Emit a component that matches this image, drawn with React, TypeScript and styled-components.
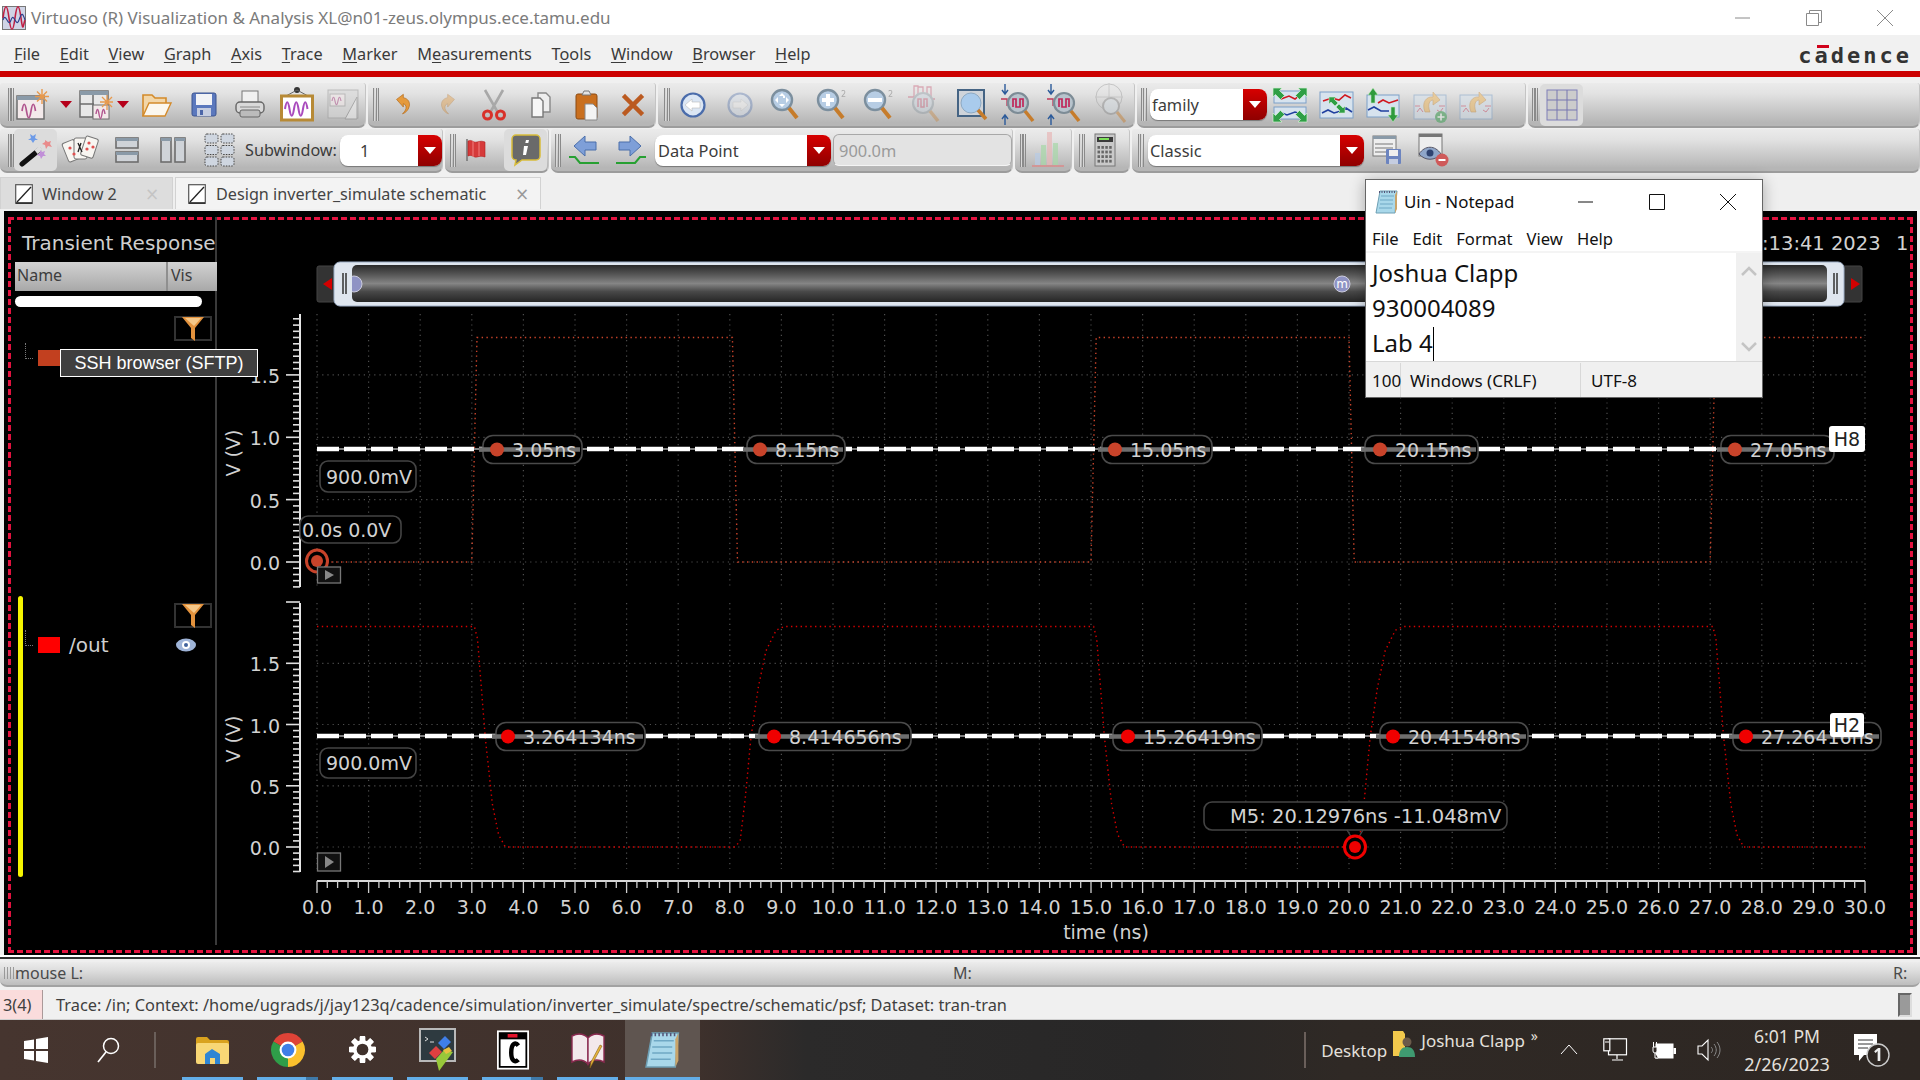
import React from "react";
import styled, { createGlobalStyle } from "styled-components";

const GlobalStyle = createGlobalStyle`
  html, body { margin: 0; padding: 0; width: 1920px; height: 1080px; overflow: hidden; background: #f0f0f0; }
  body { font-family: "Noto Sans", "Liberation Sans", sans-serif; }
  * { box-sizing: border-box; }
`;

const Page = styled.div`
  position: relative; width: 1920px; height: 1080px; display: flex; flex-direction: column; background: #f0f0f0; overflow: hidden;
`;
const TitleBar = styled.div`
  height: 35px; background: #fff; display: flex; align-items: center; padding-left: 2px; box-shadow: 0 1px 1px #ccc; position: relative;
`;
const TitleText = styled.span`
  margin-left: 5px; font-size: 17px; color: #7b7b7b; white-space: nowrap; flex: 1;
`;
const WinBtn = styled.div<{ $w: number }>`
  width: ${(p) => p.$w}px; display: flex; justify-content: center; align-items: center;
`;
const MenuBar = styled.div`
  height: 36px; background: #f1f1f1; display: flex; align-items: center; padding: 2px 0 0 14px; gap: 19.7px; font-size: 16.3px; color: #3a3a3a; position: relative;
`;
const MenuItem = styled.span`
  white-space: nowrap;
  u { text-underline-offset: 2px; }
`;
const Cadence = styled.div`
  position: absolute; right: 8px; top: 8px; font-family: "DejaVu Sans Mono", monospace; font-weight: 700; font-size: 22px; letter-spacing: 3px; color: #333;
  span { position: relative; }
  span::before { content: ""; position: absolute; left: 2px; right: 2px; top: 2px; height: 3px; background: #d0021b; }
`;
const RedRule = styled.div`height: 6px; background: #cc0000; flex: none;`;
const ToolRow = styled.div<{ $mt: number; $h: number }>`
  display: flex; height: ${(p) => p.$h}px; margin-top: ${(p) => p.$mt}px; flex: none;
`;
const Section = styled.div<{ $w?: number; $pl: number; $last?: boolean }>`
  width: ${(p) => (p.$w ? `${p.$w}px` : "auto")}; flex: ${(p) => (p.$last ? 1 : "none")}; margin-right: ${(p) => (p.$last ? 0 : 2)}px;
  padding-left: ${(p) => p.$pl}px; display: flex; align-items: center;
  background: linear-gradient(#ebebeb, #e2e2e2 25%, #b6b6b6 92%); border-bottom: 2px solid #9c9c9c; border-radius: 3px 3px 7px 7px;
  border-right: 1px solid #c4c4c4;
`;
const Grip = styled.div`
  width: 6px; height: 33px; flex: none;
  background: repeating-linear-gradient(90deg, #8a8a8a 0 1px, #d8d8d8 1px 2px, transparent 2px 2.5px);
`;
const Slot = styled.div<{ $w: number }>`
  width: ${(p) => p.$w}px; flex: none; display: flex; justify-content: center; align-items: center;
`;
const Pressed = styled.div<{ $w: number; $ml?: number }>`
  width: ${(p) => p.$w}px; height: 42px; margin-left: ${(p) => p.$ml ?? 0}px; flex: none; display: flex; justify-content: center; align-items: center;
  background: #dcdcdc; border-radius: 5px;
`;
const Combo = styled.div<{ $w: number; $ml?: number }>`
  width: ${(p) => p.$w}px; height: 31px; margin-left: ${(p) => p.$ml ?? 0}px; flex: none; display: flex; background: #fff; border-radius: 8px; overflow: hidden;
  box-shadow: 0 1px 1px #777; font-size: 16.4px; color: #3c3c3c; align-items: center;
`;
const ComboText = styled.span<{ $pl: number }>`flex: 1; padding-left: ${(p) => p.$pl}px; white-space: nowrap;`;
const ComboDrop = styled.div`
  width: 24px; height: 100%; background: linear-gradient(#d70000, #a30000 70%, #8f0000); display: flex; align-items: center; justify-content: center;
  &::after { content: ""; border-left: 6px solid transparent; border-right: 6px solid transparent; border-top: 7px solid #fff; }
`;
const DisabledInput = styled.div`
  width: 181px; height: 32px; margin-left: 2px; border-radius: 6px; background: #e3e3e3; border: 1px solid #a8a8a8; border-bottom-color: #f4f4f4; color: #9a9a9a; font-size: 16.4px; padding-left: 5px; display: flex; align-items: center;
`;
const LabelText = styled.span`
  font-size: 16.2px; color: #3c3c3c; margin-left: 2px; width: 95px; white-space: nowrap; flex: none;
`;
const TabStrip = styled.div`
  height: 32px; margin-top: 4px; display: flex; flex: none; background: #efefef;
`;
const Tab = styled.div<{ $w: number; $active?: boolean }>`
  width: ${(p) => p.$w}px; margin-right: 2px; flex: none; display: flex; align-items: center; font-size: 16.2px; color: #444;
  padding-left: ${(p) => (p.$active ? 12 : 14)}px;
  background: ${(p) => (p.$active ? "#f3f3f3" : "#dddddd")};
  border: 1px solid #d2d2d2; border-bottom: none;
`;
const TabLabel = styled.span<{ $ml: number; $w: number }>`margin-left: ${(p) => p.$ml}px; width: ${(p) => p.$w}px; white-space: nowrap; flex: none;`;
const TabClose = styled.span<{ $c: string }>`font-size: 17px; color: ${(p) => p.$c}; font-family: "DejaVu Sans", sans-serif;`;
const PlotShell = styled.div`
  height: 744px; margin-top: 2px; margin-left: 4px; margin-right: 3px; background: #000; padding: 6px 4px 2px 4px; flex: none; display: flex;
`;
const dash = "#e3123f";
const DashFrame = styled.div`
  flex: 1; display: flex; min-width: 0;
  background:
    repeating-linear-gradient(90deg, ${dash} 0 6px, transparent 6px 9px) left top / 100% 3px no-repeat,
    repeating-linear-gradient(90deg, ${dash} 0 6px, transparent 6px 9px) left bottom / 100% 3px no-repeat,
    repeating-linear-gradient(0deg, ${dash} 0 6px, transparent 6px 9px) left top / 3px 100% no-repeat,
    repeating-linear-gradient(0deg, ${dash} 0 6px, transparent 6px 9px) right top / 3px 100% no-repeat;
`;
const LeftPanel = styled.div`
  width: 209px; flex: none; padding-left: 7px; margin-bottom: 8px; border-right: 2px solid #3a3a3a; display: flex; flex-direction: column; font-family: "DejaVu Sans", sans-serif; color: #ccc;
`;
const PanelTitle = styled.div`
  height: 45px; padding-left: 7px; padding-top: 13px; font-size: 20px; line-height: 26px; color: #cfcfcf; white-space: nowrap;
`;
const PanelHead = styled.div`
  height: 29px; width: 202px; flex: none; display: flex; margin-right: -2px; background: linear-gradient(#d2d2d2, #a8a8a8); font-size: 16px; color: #3d3d3d; align-items: center; font-family: "Noto Sans", sans-serif; line-height: 25px;
`;
const HeadName = styled.span`width: 153px; padding-left: 2px; height: 100%; line-height: 27px; border-right: 2px solid #8f8f8f;`;
const HeadVis = styled.span`padding-left: 3px; height: 100%; line-height: 27px;`;
const WhitePill = styled.div`width: 187px; height: 11px; margin-top: 5px; background: #fff; border-radius: 6px; flex: none;`;
const FilterBtn = styled.div<{ $mt: number; $ml: number }>`
  width: 38px; height: 25px; flex: none; margin-top: ${(p) => p.$mt}px; margin-left: ${(p) => p.$ml}px; border: 2px solid #333; display: flex; align-items: center; justify-content: center;
`;
const TreeRow = styled.div<{ $mt: number; $ml: number }>`
  display: flex; align-items: center; height: 16px; flex: none; margin-top: ${(p) => p.$mt}px; margin-left: ${(p) => p.$ml}px;
`;
const Connector = styled.div`
  width: 8px; height: 16px; flex: none; margin-top: -14px; border-left: 1px dotted #777; border-bottom: 1px dotted #777;
`;
const Swatch = styled.div<{ $c: string }>`width: 22px; height: 16px; margin-left: 5px; background: ${(p) => p.$c}; flex: none;`;
const SigName = styled.span`margin-left: 9px; width: 107px; font-size: 20px; color: #cfcfcf; flex: none;`;
const OutBlock = styled.div`display: flex; margin-top: 230px; margin-left: 3px;`;
const YellowBar = styled.div`width: 5px; height: 281px; background: #f4f400; border-radius: 3px; flex: none;`;
const OutColumn = styled.div`display: flex; flex-direction: column;`;
const ChartSvg = styled.svg`flex: 1; display: block; min-width: 0;`;
const ChartText = styled.text`font-family: "DejaVu Sans", sans-serif; font-size: 19px; fill: #d2d2d2;`;
const WideText = styled(ChartText)`font-size: 19.5px;`;
const BadgeText = styled.text`font-family: "DejaVu Sans", sans-serif; font-size: 19px; fill: #222;`;

const Footer = styled.div`
  height: 7px; flex: none; background: #efefef; border-top: 2px solid #fff; position: relative;
  &::after { content: ""; display: block; height: 2px; background: #333; }
`;
const MouseBar = styled.div`
  height: 25px; flex: none; display: flex; align-items: center; padding: 0 0 2px 4px; font-size: 16px; color: #4a4a4a; background: linear-gradient(#ececec, #dcdcdc 40%, #bdbdbd); border-radius: 0 0 7px 7px; border-bottom: 2px solid #a2a2a2;
`;
const MouseGrip = styled.div`width: 11px; height: 12px; flex: none; background: repeating-linear-gradient(90deg, #999 0 1px, transparent 1px 3px);`;
const MouseL = styled.span`width: 938px; flex: none;`;
const MouseM = styled.span`width: 940px; flex: none;`;
const StatusRow = styled.div`
  height: 30px; margin-top: 3px; flex: none; display: flex; align-items: center; background: #f0f0f0; border-bottom: 1px solid #cfcfcf; font-size: 16.36px; color: #3f3f3f;
`;
const StatusPink = styled.div`width: 43px; height: 100%; background: #fadcdc; border-right: 1px solid #a99; padding-left: 3px; display: flex; align-items: center; flex: none;`;
const StatusText = styled.span`margin-left: 13px; flex: 1; white-space: nowrap;`;
const StatusBox = styled.div`width: 14px; height: 24px; margin-right: 8px; background: #9a9a9a; border: 2px solid #666; border-right-color: #ddd; border-bottom-color: #ddd; flex: none;`;

const Taskbar = styled.div`
  height: 60px; flex: none; display: flex; color: #e4e0dc; font-family: "Noto Sans", sans-serif; padding-right: 13px;
  background: linear-gradient(90deg, #46352f 0%, #3f312c 36%, #2b2a2a 42%, #282727 60%, #2f2925 70%, #2e2723 100%);
`;
const TaskCell = styled.div<{ $w: number }>`width: ${(p) => p.$w}px; flex: none; display: flex; align-items: center; justify-content: center;`;
const TaskSep = styled.div<{ $ml: number; $mr: number }>`width: 2px; height: 36px; align-self: center; margin-left: ${(p) => p.$ml}px; margin-right: ${(p) => p.$mr}px; background: #6a5f5a; flex: none;`;
const AppSlot = styled.div<{ $on?: boolean }>`
  width: 75px; flex: none; display: flex; flex-direction: column; background: ${(p) => (p.$on ? "#5f5550" : "transparent")};
`;
const AppIcon = styled.div`flex: 1; display: flex; align-items: center; justify-content: center; padding-top: 2px;`;
const AppLine = styled.div<{ $on?: boolean; $split?: boolean }>`
  height: 3px; margin: ${(p) => (p.$on ? "0" : "0 7px")}; flex: none;
  background: ${(p) => (p.$split ? "linear-gradient(90deg,#63aee8 80%,#3f79a8 80%)" : "#63aee8")};
`;
const TaskSpacer = styled.div`flex: 1;`;
const TaskText = styled.span<{ $s: number; $ml?: number; $mr?: number; $mt?: number }>`
  font-size: ${(p) => p.$s}px; margin-left: ${(p) => p.$ml ?? 0}px; margin-right: ${(p) => p.$mr ?? 0}px; margin-top: ${(p) => p.$mt ?? 0}px; white-space: nowrap; align-self: center; flex: none;
`;
const ClockCol = styled.div`width: 96px; margin-left: 9px; display: flex; flex-direction: column; align-items: center; justify-content: center; gap: 4px; flex: none; line-height: 24px;`;
const ClockTime = styled.span`font-size: 17.600px;`;
const ClockDate = styled.span`font-size: 18px;`;

const Tooltip = styled.div`
  position: absolute; left: 60px; top: 349px; width: 198px; height: 28px; background: #3f3f3f; border: 1px solid #fff; color: #fff; padding-top: 1px;
  font-family: "Liberation Sans", sans-serif; font-size: 18px; display: flex; align-items: center; justify-content: center;
`;
const Notepad = styled.div`
  position: absolute; left: 1365px; top: 179px; width: 398px; height: 219px; background: #fff; border: 1px solid #666; display: flex; flex-direction: column; color: #111;
  box-shadow: 0 2px 14px rgba(0,0,0,.3);
`;
const NpTitle = styled.div`height: 45px; display: flex; align-items: center; padding: 0 0 2px 8px; flex: none; font-size: 16.9px;`;
const NpTitleText = styled.span`margin-left: 4px; width: 146px; flex: none; white-space: nowrap;`;
const NpBtn = styled.div`width: 71px; flex: none; display: flex; justify-content: center;`;
const NpMenu = styled.div`height: 28px; display: flex; align-items: center; gap: 14px; padding-left: 6px; font-size: 16.6px; flex: none; border-bottom: 2px solid #f4f4f4;`;
const NpBody = styled.div`flex: 1; display: flex; min-height: 0;`;
const NpText = styled.div`flex: 1; padding: 2px 0 0 6px; font-size: 24px; line-height: 35px;`;
const Caret = styled.span`display: inline-block; width: 1px; height: 34px; background: #000; vertical-align: -9px;`;
const NpScroll = styled.div`width: 26px; background: #f0f0f0; display: flex; flex-direction: column; justify-content: space-between; align-items: center; padding: 12px 0 8px; flex: none;`;
const NpStatus = styled.div`height: 36px; flex: none; background: #f0f0f0; border-top: 1px solid #d8d8d8; display: flex; align-items: center; font-size: 17px; position: relative; padding-top: 1px;`;
const NpCell = styled.div<{ $w: number; $pl: number; $b?: boolean }>`
  width: ${(p) => p.$w}px; padding-left: ${(p) => p.$pl}px; height: 100%; display: flex; align-items: center; flex: none; white-space: nowrap; border-right: ${(p) => (p.$b ? "1px solid #d8d8d8" : "none")};
`;
const Ic = styled.svg`display: block; overflow: visible; flex: none; filter: blur(0.25px);`;

/* ---------- icons ---------- */
const W = (p: { d?: string; c?: string; w?: number }) => (
  <path d={p.d ?? "M7 20c1.5-9 3-9 4 0s2.5 9 4 0 2.5-9 4 0"} fill="none" stroke={p.c ?? "#b1558f"} strokeWidth={p.w ?? 1.7} />
);
const NewPlot = () => (
  <Ic width="34" height="32" viewBox="0 0 34 32">
    <rect x="1" y="7" width="27" height="23" fill="#f3e9ea" stroke="#6c6c6c" strokeWidth="1.5" />
    <rect x="1" y="7" width="27" height="4" fill="#8a9aa8" />
    <W d="M6 22c1.5-9 3-9 4.5 0s3 9 4.5 0 3-9 4.5 0" />
    <path d="M26 0v15M19 7.500h14M21 2.500l10 10M31 2.500l-10 10" stroke="#e8994c" strokeWidth="1.4" />
  </Ic>
);
const NewSub = () => (
  <Ic width="34" height="32" viewBox="0 0 34 32">
    <rect x="1" y="2" width="28" height="26" fill="#e8e8e8" stroke="#6c6c6c" strokeWidth="1.5" />
    <rect x="1" y="2" width="28" height="4" fill="#8a9aa8" />
    <path d="M1 15h14M14 6v22" stroke="#6c6c6c" strokeWidth="1.5" />
    <rect x="14" y="16" width="16" height="14" fill="#f3e9ea" stroke="#6c6c6c" />
    <W d="M17 25c1-6 2-6 3 0s2 6 3 0 2-6 3 0" w={1.4} />
    <path d="M28 6v15M21 13h13M23 8l10 10M33 8l-10 10" stroke="#e8994c" strokeWidth="1.3" />
  </Ic>
);
const RedCaret = () => (
  <Ic width="12" height="7" viewBox="0 0 12 7"><path d="M0 0h12L6 7z" fill="#b5001a" /></Ic>
);
const Folder = () => (
  <Ic width="30" height="26" viewBox="0 0 30 26">
    <path d="M1 24V3h9l3 3h11v6" fill="#f2d6a8" stroke="#d38a2a" strokeWidth="1.6" />
    <path d="M1 24l6-13h22l-6 13z" fill="#fbf7ee" stroke="#d38a2a" strokeWidth="1.4" />
  </Ic>
);
const Save = () => (
  <Ic width="26" height="25" viewBox="0 0 26 25">
    <rect x="1" y="1" width="24" height="23" rx="2" fill="#5b78bd" stroke="#3d5590" />
    <rect x="5" y="2" width="16" height="11" fill="#f2f3f6" />
    <rect x="6" y="16" width="14" height="8" fill="#c5cde0" />
    <rect x="9" y="18" width="3" height="5" fill="#4c66a8" />
  </Ic>
);
const Print = () => (
  <Ic width="30" height="29" viewBox="0 0 30 29">
    <rect x="7" y="1" width="16" height="13" fill="#f0f0f0" stroke="#777" />
    <rect x="1" y="12" width="28" height="11" rx="4" fill="#d9d9d9" stroke="#666" strokeWidth="1.4" />
    <rect x="5" y="20" width="20" height="7" rx="2" fill="#bcbcbc" stroke="#666" />
    <path d="M5 17h20" stroke="#888" />
  </Ic>
);
const PlotFrame = () => (
  <Ic width="34" height="35" viewBox="0 0 34 35">
    <circle cx="17" cy="3" r="3" fill="#333" />
    <path d="M6 9l11-6 11 6" fill="none" stroke="#666" />
    <rect x="1.500" y="9" width="31" height="24" fill="#fff" stroke="#b78a36" strokeWidth="3" />
    <W d="M5 22c1.500-9 3-9 4.500 0s3 9 4.500 0 3-9 4.500 0 3 9 4.500 0 3-9 4.500 0" c="#a94bbd" w={2} />
  </Ic>
);
const DimPlots = () => (
  <Ic width="32" height="32" viewBox="0 0 32 32" opacity=".55">
    <rect x="1" y="1" width="30" height="28" fill="#d8d8d8" stroke="#999" />
    <rect x="3" y="5" width="15" height="12" fill="#f3e9ea" stroke="#999" />
    <W d="M5 12c1-5 2-5 3 0s2 5 3 0 2-5 3 0" w={1.2} />
    <path d="M18 30L30 8v22z" fill="#eee" stroke="#888" />
  </Ic>
);
const Undo = ({ dim }: { dim?: boolean }) => (
  <Ic width="17" height="23" viewBox="0 0 20 26" opacity={dim ? 0.4 : 1}>
    <g transform={dim ? "translate(20 0) scale(-1 1)" : ""}>
      <path d="M3 7l8-6v4c6 1 8 6 7 10-1 5-5 8-8 9 3-3 5-6 4-9-1-2-2-3-3-3v4z" fill="#e59a3c" stroke="#b26a1c" strokeWidth=".8" />
    </g>
  </Ic>
);
const Scissors = () => (
  <Ic width="26" height="32" viewBox="0 0 26 32">
    <path d="M4 1l12 21M22 1L10 22" stroke="#a8a8a8" strokeWidth="2.6" />
    <circle cx="6.500" cy="26" r="4" fill="none" stroke="#d8322a" strokeWidth="3" />
    <circle cx="19.500" cy="26" r="4" fill="none" stroke="#d8322a" strokeWidth="3" />
  </Ic>
);
const Copy = () => (
  <Ic width="20" height="26" viewBox="0 0 20 26">
    <path d="M7 1h8l4 4v15H7z" fill="#eee" stroke="#888" strokeWidth="1.4" />
    <path d="M1 6h8l3 3v16H1z" fill="#f6f6f6" stroke="#777" strokeWidth="1.4" />
  </Ic>
);
const Paste = () => (
  <Ic width="24" height="32" viewBox="0 0 24 32">
    <rect x="1" y="5" width="21" height="25" rx="2" fill="#c96f1e" stroke="#8b4a12" />
    <path d="M7 6l2-4h5l2 4z" fill="#e3e3e3" stroke="#777" />
    <path d="M10 15h8l4 4v12H10z" fill="#f3f3f3" stroke="#888" />
  </Ic>
);
const Cross = () => (
  <Ic width="22" height="22" viewBox="0 0 22 22">
    <path d="M3 3l16 16M19 3L3 19" stroke="#bb5a20" strokeWidth="4.5" strokeLinecap="square" />
  </Ic>
);
const Nav = ({ dir, dim }: { dir: number; dim?: boolean }) => (
  <Ic width="26" height="26" viewBox="0 0 26 26" opacity={dim ? 0.35 : 1}>
    <circle cx="13" cy="13" r="11.500" fill="#dbe6f4" stroke="#4a6cab" strokeWidth="2.2" />
    <path d={dir < 0 ? "M5 13l7-6v3h8v6h-8v3z" : "M21 13l-7-6v3H6v6h8v3z"} fill="#fff" stroke="#bbb" strokeWidth=".6" />
  </Ic>
);
const Mag = ({ inner, sup, dim }: { inner?: React.ReactNode; sup?: boolean; dim?: boolean }) => (
  <Ic width="32" height="34" viewBox="0 0 32 34" opacity={dim ? 0.4 : 1}>
    <circle cx="12" cy="12" r="10" fill="#b7cde4" stroke="#7c8f9e" strokeWidth="2.4" />
    {inner}
    <path d="M19 20l8 10" stroke="#c67c2b" strokeWidth="4" />
    {sup && <text x="25" y="9" fontSize="8" fontFamily="DejaVu Sans" fill="#aaa">2</text>}
  </Ic>
);
const ZoomXIcon = ({ dim }: { dim?: boolean }) => (
  <Ic width="36" height="44" viewBox="0 0 36 44" opacity={dim ? 0.35 : 1}>
    <path d="M1 14h6V3h4v11 M11 4h5v12h4V4h4v12h4" fill="none" stroke="#c0395a" strokeWidth="1.3" />
    <circle cx="16" cy="20" r="10" fill="#c5d3df" stroke="#7d8c96" strokeWidth="2.2" />
    <path d="M11 24v-8h3v8h3v-8h3v8" fill="none" stroke="#c0395a" strokeWidth="1.5" />
    <path d="M23 28l8 10" stroke="#c67c2b" strokeWidth="3.6" />
  </Ic>
);
const ZoomFit = () => (
  <Ic width="30" height="32" viewBox="0 0 30 32">
    <rect x="1" y="1" width="26" height="26" fill="#cfd4da" stroke="#456484" strokeWidth="2" />
    <circle cx="14" cy="14" r="10" fill="#a9cbec" stroke="#8daac4" />
    <path d="M21 21l8 9" stroke="#c67c2b" strokeWidth="3.6" />
  </Ic>
);
const ZoomV = () => (
  <Ic width="34" height="44" viewBox="0 0 34 44">
    <path d="M4 1v9M1 7l3 4 3-4M4 42v-9M1 36l3-4 3 4" stroke="#2b5a9a" strokeWidth="1.4" fill="none" />
    <path d="M0 16h6v7" fill="none" stroke="#c0395a" strokeWidth="1.3" />
    <circle cx="17" cy="20" r="10" fill="#b7c3cc" stroke="#7d8c96" strokeWidth="2.2" />
    <path d="M12 24v-8h3v8h4v-8h3v8" fill="none" stroke="#c0275a" strokeWidth="1.7" />
    <path d="M24 28l8 10" stroke="#c67c2b" strokeWidth="3.6" />
  </Ic>
);
const Crosshair = () => (
  <Ic width="32" height="44" viewBox="0 0 32 44" opacity=".45">
    <circle cx="14" cy="14" r="13" fill="none" stroke="#999" />
    <path d="M14 0v28M0 14h28" stroke="#aaa" />
    <circle cx="16" cy="23" r="8" fill="#d5dde3" stroke="#888" strokeWidth="2" />
    <path d="M22 29l8 10" stroke="#c67c2b" strokeWidth="3" />
  </Ic>
);
const Panel = ({ children, dim }: { children: React.ReactNode; dim?: boolean }) => (
  <Ic width="34" height="34" viewBox="0 0 34 34" opacity={dim ? 0.5 : 1}>{children}</Ic>
);
const greenBig = "M0 0h9l-2.500 2.500 5 5-4 4-5-5L0 9zM34 0h-9l2.500 2.500-5 5 4 4 5-5L34 9zM0 34h9l-2.500-2.500 5-5-4-4-5 5L0 25zM34 34h-9l2.500-2.500-5-5 4-4 5 5 2.500-2.500z";
const TraceSplit = () => (
  <Panel>
    <rect x="1" y="3" width="32" height="12" fill="#d7e3ee" stroke="#7da0c8" /><rect x="1" y="19" width="32" height="12" fill="#d7e3ee" stroke="#7da0c8" />
    <path d="M8 11l8-3 6 3 6-5" stroke="#d01820" strokeWidth="1.6" fill="none" /><path d="M6 24l8 3 8-3 6 2" stroke="#2040a0" strokeWidth="1.6" fill="none" />
    <path d={greenBig} fill="#2f9f45" stroke="#d5f0d5" strokeWidth=".7" />
  </Panel>
);
const TraceOverlay = () => (
  <Panel>
    <rect x="0" y="4" width="33" height="26" fill="#d7e3ee" stroke="#7da0c8" />
    <path d="M3 13l9-3 7 2 6-5 6 3" stroke="#d01820" strokeWidth="1.6" fill="none" /><path d="M2 25l6-3 6 3 7-2 5-3 6 4" stroke="#2040a0" strokeWidth="1.6" fill="none" />
    <path d="M9 9h7l-2 2 4 4-3 3-4-4-2 2zM25 25h-7l2-2-4-4 3-3 4 4 2-2z" fill="#2f9f45" stroke="#d5f0d5" strokeWidth=".6" />
  </Panel>
);
const TraceSort = () => (
  <Panel>
    <rect x="1" y="7" width="32" height="22" fill="#d7e3ee" stroke="#7da0c8" />
    <path d="M12 15l5-3 6 3 9-3" stroke="#d01820" strokeWidth="1.6" fill="none" /><path d="M2 22l6-3 7 4 8 0" stroke="#2040a0" strokeWidth="1.6" fill="none" />
    <path d="M7 0l5 7H9v8H5V7H2zM27 34l5-7h-3v-8h-4v8h-3z" fill="#2f9a3d" stroke="#bfe8bf" strokeWidth=".6" />
  </Panel>
);
const TraceCurl = ({ plus }: { plus?: boolean }) => (
  <Panel dim>
    <rect x="1" y="7" width="32" height="24" fill="#d7e3ee" stroke="#7da0c8" />
    <path d="M2 18h5M26 18h6M4 24l3-4 3 4M24 22l3 2 3-4" stroke="#d0506a" fill="none" />
    <path d="M12 24c-4-10 2-16 8-15V4l7 8-7 5v-5c-3 0-6 4-3 12z" fill="#f0b85a" stroke="#c08030" strokeWidth=".6" />
    {plus && <><circle cx="28" cy="29" r="6" fill="#38a050" /><path d="M28 25.500v7M24.500 29h7" stroke="#fff" strokeWidth="1.6" /></>}
  </Panel>
);
const GridIcon = () => (
  <Ic width="32" height="32" viewBox="0 0 32 32">
    <rect x="1" y="1" width="30" height="30" fill="#ccc" stroke="#7f7fb8" />
    <path d="M1 11h30M1 21h30M11 1v30M21 1v30" stroke="#7676b0" strokeWidth="1" />
  </Ic>
);
const Wand = () => (
  <Ic width="34" height="34" viewBox="0 0 34 34">
    <path d="M3 31l17-14" stroke="#111" strokeWidth="5" strokeLinecap="round" />
    <path d="M17 19l5-4" stroke="#ddd" strokeWidth="5" />
    <path d="M11 1l3 2 3-2-1 4 3 2h-3l-2 3-2-3H9l3-2z" fill="#6d9be8" />
    <path d="M26 7l3 2 3-1-1 3 2 3-4-1-2 3-1-4-3-1 3-2z" fill="#e98b8b" />
    <path d="M21 17l2 2 3-1-1 3 2 2-3 0-2 3-1-3-3-1 3-2z" fill="#c18fd8" />
  </Ic>
);
const Cards = () => (
  <Ic width="36" height="32" viewBox="0 0 36 32">
    <g stroke="#777" fill="#f8f6f2">
      <rect x="3" y="7" width="13" height="20" rx="2" transform="rotate(-22 9 17)" />
      <rect x="12" y="4" width="13" height="21" rx="2" />
      <rect x="21" y="3" width="13" height="20" rx="2" transform="rotate(18 27 13)" />
    </g>
    <circle cx="8" cy="14" r="1.600" fill="#e05050" /><circle cx="12" cy="20" r="1.600" fill="#e05050" />
    <path d="M16 9l4 9M19 9l-3 9" stroke="#222" strokeWidth="1.3" />
    <circle cx="27" cy="9" r="1.600" fill="#e05050" /><circle cx="31" cy="13" r="1.600" fill="#e05050" /><circle cx="25" cy="15" r="1.600" fill="#e05050" />
  </Ic>
);
const pane = { fill: "#cfd3d8", stroke: "#6d6d6d", strokeWidth: 1.6 };
const SplitH = () => (
  <Ic width="24" height="26" viewBox="0 0 24 26">
    <rect x="1" y="1" width="22" height="10" {...pane} /><rect x="1" y="1" width="22" height="3" fill="#8a9aa8" />
    <rect x="1" y="15" width="22" height="10" {...pane} /><rect x="1" y="15" width="22" height="3" fill="#8a9aa8" />
  </Ic>
);
const SplitV = () => (
  <Ic width="26" height="26" viewBox="0 0 26 26">
    <rect x="1" y="1" width="10" height="24" {...pane} /><rect x="1" y="1" width="10" height="3" fill="#8a9aa8" />
    <rect x="15" y="1" width="10" height="24" {...pane} /><rect x="15" y="1" width="10" height="3" fill="#8a9aa8" />
  </Ic>
);
const SixGrid = () => (
  <Ic width="32" height="34" viewBox="0 0 32 34">
    {[0, 1].map((c) => [0, 1, 2].map((r) => (
      <rect key={`${c}${r}`} x={1 + c * 16} y={1 + r * 11.5} width="13" height="9" rx="2" fill="#cfd6e0" stroke="#444" strokeDasharray="1.5 1.2" />
    )))}
  </Ic>
);
const Flag = () => (
  <Ic width="22" height="24" viewBox="0 0 22 24">
    <path d="M2 1v22" stroke="#777" strokeWidth="1.6" />
    <path d="M3 3c4-2 5 2 9 1s5-1 8 0v15c-3-1-5-1-8 0s-5-3-9-1z" fill="#d63a3a" stroke="#b02020" strokeWidth=".6" />
    <path d="M8 3v16M14 4v14" stroke="#f08080" />
  </Ic>
);
const Info = () => (
  <Ic width="30" height="32" viewBox="0 0 30 32">
    <path d="M5 1h20a4 4 0 0 1 4 4v17a4 4 0 0 1-4 4H11l-7 5 1-5a4 4 0 0 1-4-4V5a4 4 0 0 1 4-4z" fill="#6a6a6a" stroke="#d8bc3a" strokeWidth="1.5" />
    <path d="M13 12h4l-2 9h-3zM15 6h3l-.7 3h-3z" fill="#fff" />
  </Ic>
);
const ArrowNav = ({ right }: { right?: boolean }) => (
  <Ic width="32" height="30" viewBox="0 0 32 30">
    <g transform={right ? "" : "translate(32 0) scale(-1 1)"}>
      <path d="M4 7h11V1l11 10-11 10v-6H4z" fill="#7e9fd8" stroke="#4b6eaa" />
      <path d="M1 28h19l5-6h6" fill="none" stroke="#27a032" strokeWidth="2" />
    </g>
  </Ic>
);
const BarsIcon = () => (
  <Ic width="32" height="38" viewBox="0 0 32 38" opacity=".7">
    <rect x="3" y="22" width="5" height="12" fill="#b8cce6" /><rect x="9" y="14" width="5" height="20" fill="#a8d8a8" />
    <rect x="15" y="1" width="5" height="33" fill="#e8b8b8" /><rect x="21" y="12" width="5" height="22" fill="#a8d8a8" />
    <path d="M0 35h32" stroke="#d88" strokeWidth="2" />
  </Ic>
);
const Calc = () => (
  <Ic width="22" height="34" viewBox="0 0 22 34">
    <rect x="1" y="1" width="20" height="32" fill="#c9c9c9" stroke="#777" />
    <rect x="3" y="4" width="16" height="5" fill="#3b3b3b" /><rect x="5" y="5" width="10" height="2" fill="#7ee05a" />
    {[0, 1, 2, 3].map((r) => [0, 1, 2, 3].map((c) => <rect key={`${r}${c}`} x={3.5 + c * 3.9} y={13 + r * 4.6} width="2.5" height="2.8" fill="#666" />))}
  </Ic>
);
const ListSave = () => (
  <Ic width="30" height="30" viewBox="0 0 30 30">
    <rect x="1" y="1" width="23" height="20" fill="#eee" stroke="#777" /><rect x="1" y="1" width="23" height="3" fill="#8a9aa8" />
    <path d="M3 9h18M3 13h18M3 17h12" stroke="#777" />
    <rect x="14" y="14" width="15" height="15" rx="1" fill="#6c84bf" /><rect x="17" y="15" width="9" height="6" fill="#eee" /><rect x="17" y="24" width="9" height="5" fill="#c5cde0" />
  </Ic>
);
const EyeMinus = () => (
  <Ic width="30" height="34" viewBox="0 0 30 34">
    <rect x="1" y="1" width="23" height="22" fill="#eee" stroke="#777" /><rect x="1" y="1" width="23" height="3" fill="#777" />
    <path d="M1 21c6-9 16-9 22 0-6 7-16 7-22 0z" fill="#8fa6c9" stroke="#556" />
    <circle cx="12" cy="20" r="3.500" fill="#2f4370" />
    <circle cx="24" cy="27" r="6.500" fill="#cf5a5a" /><path d="M20.500 27h7" stroke="#fff" strokeWidth="2" />
  </Ic>
);
const TabDoc = () => (
  <Ic width="18" height="20" viewBox="0 0 18 20">
    <rect x=".7" y=".7" width="16.6" height="18.6" fill="#fff" stroke="#555" strokeWidth="1.2" />
    <path d="M2 18L16 3" stroke="#222" strokeWidth="1.3" />
    <path d="M1 19h16" stroke="#222" strokeWidth="1.5" />
  </Ic>
);
const Funnel = () => (
  <Ic width="22" height="24" viewBox="0 0 22 24">
    <path d="M0 0h22L13 11v13l-4-3V11z" fill="#e3923d" />
    <path d="M3 1h16l-7 8z" fill="#f5c788" />
  </Ic>
);
const Eye = () => (
  <Ic width="20" height="14" viewBox="0 0 20 14">
    <ellipse cx="10" cy="7" rx="10" ry="6.500" fill="#9fb4d8" />
    <circle cx="10" cy="7" r="4" fill="#fff" /><circle cx="10" cy="7" r="2" fill="#42639c" />
  </Ic>
);
const VirtuosoLogo = () => (
  <Ic width="24" height="24" viewBox="0 0 24 24">
    <rect x=".5" y=".5" width="23" height="23" fill="#cfd4e6" stroke="#777" />
    <path d="M1 12c2-15 4-15 6 0s4 15 6 0 4-15 6 0 2 8 4 2" fill="none" stroke="#c02044" strokeWidth="1.6" />
    <path d="M1 14c3-9 5 9 8 0s5 9 8 0 4-6 6 0" fill="none" stroke="#2c3e8c" strokeWidth="1.1" />
  </Ic>
);
const LineGlyph = ({ d, w = 18, h = 18, c = "#8a8a8a", sw = 1 }: { d: string; w?: number; h?: number; c?: string; sw?: number }) => (
  <svg width={w} height={h} viewBox={`0 0 ${w} ${h}`} style={{ display: "block" }}>
    <path d={d} fill="none" stroke={c} strokeWidth={sw} />
  </svg>
);
const NotepadIcon = ({ s = 26 }: { s?: number }) => (
  <Ic width={s} height={s} viewBox="0 0 26 26">
    <path d="M6 2h17l-2 22H2z" fill="#a9d8ea" stroke="#6d9fb4" />
    <path d="M7 7h13M6 11h13M6 15h13M5 19h13" stroke="#6fa8c4" />
    <path d="M5 3h17" stroke="#557" strokeDasharray="1 1.5" strokeWidth="2" />
    <path d="M21 6l2-4v18l-2 4z" fill="#c9a46a" />
  </Ic>
);
const WinLogo = () => (
  <Ic width="24" height="26" viewBox="0 0 24 26">
    <path d="M0 4l10-1.600V12H0zM12 2l12-2v12H12zM0 14h10v9.600L0 22zM12 14h12v12l-12-2z" fill="#fff" />
  </Ic>
);
const Search = () => (
  <Ic width="24" height="26" viewBox="0 0 24 26">
    <circle cx="15" cy="9" r="7.500" fill="none" stroke="#fff" strokeWidth="1.5" />
    <path d="M10 15L2 25" stroke="#fff" strokeWidth="1.7" />
  </Ic>
);
const FolderTask = () => (
  <Ic width="33" height="28" viewBox="0 0 33 28">
    <path d="M0 3a2 2 0 0 1 2-2h9l3 3h17a2 2 0 0 1 2 2v3H0z" fill="#d9a21e" />
    <rect x="0" y="7" width="33" height="21" rx="2" fill="#f8d775" />
    <path d="M9 28v-10l7-5 8 5v10h-5v-6h-5v6z" fill="#2f86d4" />
  </Ic>
);
const Chrome = () => (
  <Ic width="36" height="36" viewBox="0 0 32 32">
    <path d="M16 16L3 8.500A15 15 0 0 1 29 8.500z" fill="#de4337" />
    <path d="M16 16L29 8.500A15 15 0 0 1 16 31z" fill="#fbc02d" />
    <path d="M16 16V31A15 15 0 0 1 3 8.500z" fill="#2f9e49" />
    <circle cx="16" cy="16" r="7.500" fill="#fff" /><circle cx="16" cy="16" r="5.600" fill="#3f7fe8" />
  </Ic>
);
const Gear = () => (
  <Ic width="27" height="27" viewBox="0 0 30 30">
    <g fill="#fff">
      {[0, 45, 90, 135, 180, 225, 270, 315].map((a) => <rect key={a} x="12" y="0" width="6" height="30" rx="1" transform={`rotate(${a} 15 15)`} />)}
      <circle cx="15" cy="15" r="10.500" />
    </g>
    <circle cx="15" cy="15" r="6.500" fill="#3f312c" />
  </Ic>
);
const TermTask = () => (
  <Ic width="38" height="44" viewBox="0 0 38 44">
    <rect x="1" y="1" width="35" height="32" fill="#2e3a40" stroke="#b9b9b9" strokeWidth="2" />
    <path d="M6 9l3 2-3 2M11 14h4" stroke="#ddd" fill="none" />
    <path d="M10 25l7-7 6 6-7 7z" fill="#e04040" /><path d="M19 15l7-7 6 6-7 7z" fill="#3f7fe8" />
    <path d="M17 31l8-9 9 2-14 19z" fill="#98c83a" /><path d="M24 22l6-3 3 4-6 3z" fill="#e8c040" />
  </Ic>
);
const CBox = () => (
  <Ic width="32" height="44" viewBox="0 0 36 44">
    <rect x="1" y="1" width="34" height="42" fill="#000" stroke="#fff" strokeWidth="2" />
    <rect x="12" y="4" width="11" height="4" fill="#e3132b" />
    <rect x="4" y="10" width="28" height="30" fill="#fff" />
    <path d="M24 17c-3-4-8-3-8 8 0 10 5 11 8 8" fill="none" stroke="#000" strokeWidth="5" />
  </Ic>
);
const Book = () => (
  <Ic width="36" height="36" viewBox="0 0 36 36">
    <path d="M2 4c6-3 12-2 16 2v26c-4-4-10-5-16-2z" fill="#f3e9ec" stroke="#8a2a50" strokeWidth="1.4" />
    <path d="M34 4c-6-3-12-2-16 2v26c4-4 10-5 16-2z" fill="#f3e9ec" stroke="#8a2a50" strokeWidth="1.4" />
    <path d="M32 14L20 36l1-6 9-17z" fill="#e8b53a" stroke="#84621a" strokeWidth=".6" />
  </Ic>
);
const Person = () => (
  <Ic width="22" height="30" viewBox="0 0 22 30" style={{ marginTop: -10 }}>
    <path d="M0 1h10l2 3v22H0z" fill="#f2c94c" />
    <circle cx="14" cy="12" r="4.500" fill="#6b5a4a" />
    <path d="M6 27c0-7 3-10 8-10s8 3 8 10z" fill="#3f9a70" />
  </Ic>
);
const Monitor = () => (
  <Ic width="24" height="24" viewBox="0 0 24 24">
    <rect x="5.500" y=".8" width="18" height="16" fill="none" stroke="#fff" strokeWidth="1.2" />
    <rect x=".8" y=".8" width="6" height="12" fill="#2e2723" stroke="#fff" strokeWidth="1.2" />
    <path d="M14 17v4M9 22h11M2 4h4" stroke="#fff" strokeWidth="1.2" />
  </Ic>
);
const Battery = () => (
  <Ic width="26" height="20" viewBox="0 0 26 20">
    <rect x="6" y="4" width="17" height="14" fill="#fff" stroke="#fff" />
    <rect x="23.500" y="8" width="2.500" height="6" fill="#fff" />
    <path d="M3 7v4a2 2 0 0 0 4 0V7zM3.500 7V2M6.500 7V2M5 13v5h3" fill="#2e2723" stroke="#fff" />
  </Ic>
);
const Speaker = () => (
  <Ic width="24" height="24" viewBox="0 0 24 24">
    <path d="M1 8h4l6-6v20l-6-6H1z" fill="none" stroke="#fff" strokeWidth="1.1" />
    <path d="M14 9c2 2 2 4 0 6M17 6c3 4 3 8 0 12M20 4c4 5 4 11 0 16" fill="none" stroke="#888" />
  </Ic>
);
const Notif = () => (
  <Ic width="38" height="36" viewBox="0 0 38 36">
    <path d="M2 2h23v21h-13l-5 6v-6H2z" fill="#fff" />
    <path d="M6 8h15M6 12h15M6 16h10" stroke="#333" />
    <circle cx="26" cy="23" r="11" fill="#2e2723" stroke="#ccc" strokeWidth="1.4" />
    <text x="26" y="29" textAnchor="middle" fontSize="17" fontFamily="Noto Sans" fontWeight="700" fill="#eee">1</text>
  </Ic>
);

/* ---------- chart ---------- */
const X = (t: number) => 317 + t * 51.6;
const YT = (v: number) => 562 - v * 124.7;
const YB = (v: number) => 847 - v * 122.5;
const pts = (a: number[][], y: (v: number) => number) => a.map(([t, v]) => `${X(t).toFixed(1)},${y(v).toFixed(1)}`).join(" ");
const inPts = [[0, 0], [3, 0], [3.1, 1.8], [8.05, 1.8], [8.15, 0], [15, 0], [15.1, 1.8], [20, 1.8], [20.1, 0], [27, 0], [27.1, 1.8], [30, 1.8]];
const fall = (t: number) => [[t, 1.8], [t + 0.06, 1.7], [t + 0.21, 0.9], [t + 0.35, 0.35], [t + 0.47, 0.1], [t + 0.6, 0]];
const rise = (t: number) => [[t, 0], [t + 0.1, 0.05], [t + 0.2, 0.4], [t + 0.31, 0.9], [t + 0.45, 1.3], [t + 0.6, 1.6], [t + 0.8, 1.77], [t + 0.95, 1.8]];
const outPts = [[0, 1.8], ...fall(3.05), ...rise(8.1), ...fall(15.05), ...rise(20.1), ...fall(27.05), [30, 0]];
const range = (n: number) => Array.from({ length: n }, (_, i) => i);

const YAxis = ({ top, bottom, y, label }: { top: number; bottom: number; y: (v: number) => number; label: number }) => {
  const ticks = range(Math.floor((y(-0.2) - top) / Math.abs(y(0) - y(0.05))) + 2).map((i) => -0.2 + i * 0.05);
  return (
    <g>
      <path d={`M300 ${top}V${bottom}`} stroke="#e6e6e6" strokeWidth="2" />
      {ticks.filter((v) => y(v) >= top - 1 && y(v) <= bottom + 1).map((v) => {
        const major = Math.abs(v * 2 - Math.round(v * 2)) < 0.01;
        return <path key={v} d={`M${major ? 286 : 293} ${y(v).toFixed(1)}H300`} stroke="#e0e0e0" strokeWidth="1.6" />;
      })}
      {[0, 0.5, 1, 1.5].map((v) => (
        <ChartText key={v} x={280} y={y(v) + 8} textAnchor="end">{v.toFixed(1)}</ChartText>
      ))}
      <ChartText transform={`translate(240 ${label}) rotate(-90)`} textAnchor="middle">V (V)</ChartText>
    </g>
  );
};
const Grid = ({ top, bottom, y }: { top: number; bottom: number; y: (v: number) => number }) => (
  <g stroke="#4e4e4e" strokeWidth="1.2" strokeDasharray="1.2 4">
    {range(31).map((i) => <path key={i} d={`M${X(i).toFixed(1)} ${top}V${bottom}`} />)}
    {[0, 0.5, 1, 1.5].map((v) => <path key={v} d={`M317 ${y(v).toFixed(1)}H1865`} />)}
  </g>
);
const HLine = ({ y }: { y: number }) => (
  <g>
    <path d={`M317 ${y}H1850`} stroke="#fff" strokeWidth="1" />
    <path d={`M317 ${y}H1850`} stroke="#fff" strokeWidth="4.5" strokeDasharray="22 5" />
  </g>
);
const Capsule = ({ x1, x2, y, dot, text, color }: { x1: number; x2: number; y: number; dot: number; text: string; color: string }) => (
  <g>
    <rect x={x1} y={y - 14} width={x2 - x1} height={28} rx={10} fill="#000" stroke="#4a4a4a" strokeWidth="1.6" />
    <path d={`M${x1 - 4} ${y}H${x2 - 2}`} stroke="#6e6e6e" strokeWidth="4.5" />
    <circle cx={dot} cy={y} r={7} fill={color} />
    <ChartText x={dot + 15} y={y + 7}>{text}</ChartText>
  </g>
);
const Box = ({ x1, x2, y1, y2, text, tx }: { x1: number; x2: number; y1: number; y2: number; text: string; tx: number }) => (
  <g>
    <rect x={x1} y={y1} width={x2 - x1} height={y2 - y1} rx={8} fill="#000" stroke="#444" strokeWidth="1.6" />
    <ChartText x={tx} y={(y1 + y2) / 2 + 7}>{text}</ChartText>
  </g>
);
const Badge = ({ x, y, w, h, text }: { x: number; y: number; w: number; h: number; text: string }) => (
  <g>
    <rect x={x} y={y} width={w} height={h} rx={3} fill="#fff" />
    <BadgeText x={x + w / 2} y={y + h / 2 + 7} textAnchor="middle">{text}</BadgeText>
  </g>
);
const Play = ({ y, h }: { y: number; h: number }) => (
  <g>
    <rect x={317.5} y={y} width={23} height={h} fill="#111" stroke="#777" strokeWidth="1.3" />
    <path d={`M325 ${y + 3}l9 ${h / 2 - 3}-9 ${h / 2 - 3}z`} fill="#888" />
  </g>
);
const Marker = ({ x, y, c, inner }: { x: number; y: number; c: string; inner: string }) => (
  <g>
    <ellipse cx={x} cy={y} rx={10.5} ry={11} fill="#000" stroke={c} strokeWidth="3" />
    <circle cx={x} cy={y} r={6} fill={inner} />
  </g>
);
const Chart = () => (
  <ChartSvg viewBox="217 217 1696 736" width="1696" height="736">
    <defs>
      <linearGradient id="sl" x1="0" y1="0" x2="0" y2="1">
        <stop offset="0" stopColor="#2a2a2a" /><stop offset=".28" stopColor="#5a5a5a" /><stop offset=".5" stopColor="#858585" /><stop offset=".72" stopColor="#484848" /><stop offset="1" stopColor="#262626" />
      </linearGradient>
    </defs>
    {/* slider */}
    <rect x="317" y="266" width="30" height="36" rx="2" fill="#333" stroke="#444" />
    <path d="M323 284l9-6v12z" fill="#d40000" />
    <rect x="1830" y="266" width="32" height="36" rx="2" fill="#333" stroke="#444" />
    <path d="M1860 284l-9-6v12z" fill="#d40000" />
    <rect x="334" y="262" width="1510" height="44" rx="6" fill="#dfe6ef" stroke="#9fb0c8" />
    <rect x="352" y="265" width="1475" height="37" rx="5" fill="url(#sl)" />
    <circle cx="354" cy="284" r="8" fill="#8f93c4" stroke="#ccd" />
    <rect x="337" y="266" width="15" height="35" fill="#dfe6ef" />
    <path d="M343 273v21M346 273v21M1834 273v21M1837 273v21" stroke="#333" strokeWidth="1.5" />
    <circle cx="1342" cy="284" r="8" fill="#8f93c4" stroke="#ccd" />
    <text x="1342" y="288" textAnchor="middle" fontSize="12" fontFamily="DejaVu Sans" fill="#fff">m</text>
    {/* titles */}
    <WideText x="1762" y="250">:13:41 2023</WideText>
    <WideText x="1896" y="250">1</WideText>
    {/* top plot */}
    <Grid top={314} bottom={587} y={YT} />
    <YAxis top={314} bottom={587} y={YT} label={453} />
    <polyline points={pts(inPts, YT)} fill="none" stroke="#c8432a" strokeWidth="1.4" strokeDasharray="1.4 3.4" />
    <HLine y={449} />
    <Capsule x1={483} x2={582} y={449.5} dot={497} text="3.05ns" color="#c8432a" />
    <Capsule x1={747} x2={845} y={449.5} dot={760} text="8.15ns" color="#c8432a" />
    <Capsule x1={1102} x2={1212} y={449.5} dot={1115} text="15.05ns" color="#c8432a" />
    <Capsule x1={1365} x2={1478} y={449.5} dot={1380} text="20.15ns" color="#c8432a" />
    <Capsule x1={1721} x2={1834} y={449.5} dot={1735} text="27.05ns" color="#c8432a" />
    <Badge x={1829} y={426} w={36} h={26} text="H8" />
    <Box x1={320} x2={416} y1={461} y2={492} text="900.0mV" tx={326} />
    <Box x1={300} x2={401} y1={516} y2={543} text="0.0s 0.0V" tx={302} />
    <Marker x={317} y={561} c="#c8432a" inner="#c8432a" />
    <Play y={567} h={16} />
    {/* bottom plot */}
    <Grid top={603} bottom={869} y={YB} />
    <YAxis top={603} bottom={872} y={YB} label={739} />
    <polyline points={pts(outPts, YB)} fill="none" stroke="#d80000" strokeWidth="1.4" strokeDasharray="1.4 3.4" />
    <HLine y={736} />
    <Capsule x1={496} x2={645} y={736.5} dot={508} text="3.264134ns" color="#f00000" />
    <Capsule x1={759} x2={911} y={736.5} dot={774} text="8.414656ns" color="#f00000" />
    <Capsule x1={1113} x2={1262} y={736.5} dot={1128} text="15.26419ns" color="#f00000" />
    <Capsule x1={1380} x2={1528} y={736.5} dot={1393} text="20.41548ns" color="#f00000" />
    <Capsule x1={1733} x2={1881} y={736.5} dot={1746} text="27.26416ns" color="#f00000" />
    <Badge x={1830} y={713} w={34} h={24} text="H2" />
    <Box x1={320} x2={416} y1={748} y2={778} text="900.0mV" tx={326} />
    <rect x={1204} y={802} width={303} height={28} rx={8} fill="#000" stroke="#444" strokeWidth="1.6" />
    <WideText x={1230} y={823}>M5: 20.12976ns -11.048mV</WideText>
    <path d="M1347 830l6 10M1363 830l-6 10" stroke="#444" strokeWidth="1.4" />
    <Marker x={1355} y={847} c="#f00000" inner="#f00000" />
    <Play y={853} h={18} />
    {/* x axis */}
    <path d="M317 881H1865" stroke="#d8d8d8" strokeWidth="2" />
    {range(151).map((i) => {
      const x = 317 + (i * 51.6) / 5;
      return <path key={i} d={`M${x.toFixed(1)} 881V${i % 5 === 0 ? 893 : 888}`} stroke="#cfcfcf" strokeWidth="1.3" />;
    })}
    {range(31).map((i) => (
      <ChartText key={i} x={X(i)} y={914} textAnchor="middle">{i.toFixed(1)}</ChartText>
    ))}
    <ChartText x={1106} y={939} textAnchor="middle">time (ns)</ChartText>
  </ChartSvg>
);

const menus: [string, string, string][] = [
  ["", "F", "ile"], ["", "E", "dit"], ["", "V", "iew"], ["", "G", "raph"], ["", "A", "xis"], ["", "T", "race"], ["", "M", "arker"],
  ["M", "e", "asurements"], ["T", "o", "ols"], ["", "W", "indow"], ["", "B", "rowser"], ["", "H", "elp"],
];

export default function App() {
  return (
    <Page>
      <GlobalStyle />
      <TitleBar>
        <VirtuosoLogo />
        <TitleText>Virtuoso (R) Visualization &amp; Analysis XL@n01-zeus.olympus.ece.tamu.edu</TitleText>
        <WinBtn $w={70}><LineGlyph d="M1 9h15" /></WinBtn>
        <WinBtn $w={71}><LineGlyph d="M1.5 4.5h12v12h-12zM4.5 4.5v-3h12v12h-3" /></WinBtn>
        <WinBtn $w={71}><LineGlyph d="M1 1l16 16M17 1L1 17" /></WinBtn>
      </TitleBar>
      <MenuBar>
        {menus.map(([a, b, c]) => <MenuItem key={a + b + c}>{a}<u>{b}</u>{c}</MenuItem>)}
        <Cadence>c<span>a</span>dence</Cadence>
      </MenuBar>
      <RedRule />
      <ToolRow $mt={6} $h={45}>
        <Section $w={366} $pl={8}>
          <Grip />
          <Slot $w={38}><NewPlot /></Slot><Slot $w={28}><RedCaret /></Slot>
          <Slot $w={32}><NewSub /></Slot><Slot $w={22}><RedCaret /></Slot>
          {[<Folder />, <Save />, <Print />, <PlotFrame />, <DimPlots />].map((n, i) => <Slot key={i} $w={46.5}>{n}</Slot>)}
        </Section>
        <Section $w={288} $pl={5}>
          <Grip />
          {[<Undo />, <Undo dim />, <Scissors />, <Copy />, <Paste />, <Cross />].map((n, i) => <Slot key={i} $w={46.2}>{n}</Slot>)}
        </Section>
        <Section $w={477} $pl={6}>
          <Grip />
          {[
            <Nav dir={-1} />, <Nav dir={1} dim />,
            <Mag inner={<path d="M12 5l3 3h-2v2h2v-2M5 12l3-3v6zM19 12l-3-3v6zM12 19l-3-3h6zM12 5l-3 3h6z" fill="#fff" />} />,
            <Mag sup inner={<path d="M10 6h4v4h4v4h-4v4h-4v-4H6v-4h4z" fill="#fff" />} />,
            <Mag sup inner={<path d="M5 10h14v4H5z" fill="#fff" />} />,
            <ZoomXIcon dim />, <ZoomFit />, <ZoomV />, <ZoomV />, <Crosshair />,
          ].map((n, i) => <Slot key={i} $w={46.4}>{n}</Slot>)}
        </Section>
        <Section $w={389} $pl={4}>
          <Grip />
          <Combo $w={117} $ml={3}><ComboText $pl={2}>family</ComboText><ComboDrop /></Combo>
          {[<TraceSplit />, <TraceOverlay />, <TraceSort />, <TraceCurl plus />, <TraceCurl />].map((n, i) => <Slot key={i} $w={46.5}>{n}</Slot>)}
        </Section>
        <Section $last $pl={4}>
          <Grip />
          <Pressed $w={43} $ml={2}><GridIcon /></Pressed>
        </Section>
      </ToolRow>
      <ToolRow $mt={1} $h={44}>
        <Section $w={443} $pl={8}>
          <Grip />
          <Pressed $w={43}><Wand /></Pressed>
          {[<Cards />, <SplitH />, <SplitV />, <SixGrid />].map((n, i) => <Slot key={i} $w={46.5}>{n}</Slot>)}
          <LabelText>Subwindow:</LabelText>
          <Combo $w={102}><ComboText $pl={20}>1</ComboText><ComboDrop /></Combo>
        </Section>
        <Section $w={104} $pl={5}>
          <Grip />
          <Slot $w={40}><Flag /></Slot>
          <Pressed $w={43} $ml={8}><Info /></Pressed>
        </Section>
        <Section $w={462} $pl={4}>
          <Grip />
          <Slot $w={46.5}><ArrowNav /></Slot>
          <Slot $w={46.5}><ArrowNav right /></Slot>
          <Combo $w={176} $ml={1}><ComboText $pl={3}>Data Point</ComboText><ComboDrop /></Combo>
          <DisabledInput>900.0m</DisabledInput>
        </Section>
        <Section $w={57} $pl={5}><Grip /><Slot $w={44}><BarsIcon /></Slot></Section>
        <Section $w={56} $pl={5}><Grip /><Slot $w={40}><Calc /></Slot></Section>
        <Section $last $pl={6}>
          <Grip />
          <Combo $w={216} $ml={4}><ComboText $pl={2}>Classic</ComboText><ComboDrop /></Combo>
          <Slot $w={46}><ListSave /></Slot>
          <Slot $w={46}><EyeMinus /></Slot>
        </Section>
      </ToolRow>
      <TabStrip>
        <Tab $w={173}>
          <TabDoc />
          <TabLabel $ml={9} $w={103}>Window 2</TabLabel>
          <TabClose $c="#c4c4c4">×</TabClose>
        </Tab>
        <Tab $w={366} $active>
          <TabDoc />
          <TabLabel $ml={10} $w={299}>Design inverter_simulate schematic</TabLabel>
          <TabClose $c="#999">×</TabClose>
        </Tab>
      </TabStrip>
      <PlotShell>
        <DashFrame>
          <LeftPanel>
            <PanelTitle>Transient Response</PanelTitle>
            <PanelHead><HeadName>Name</HeadName><HeadVis>Vis</HeadVis></PanelHead>
            <WhitePill />
            <FilterBtn $mt={9} $ml={159}><Funnel /></FilterBtn>
            <TreeRow $mt={9} $ml={10}><Connector /><Swatch $c="#c2401f" /></TreeRow>
            <OutBlock>
              <YellowBar />
              <OutColumn>
                <FilterBtn $mt={7} $ml={151}><Funnel /></FilterBtn>
                <TreeRow $mt={9} $ml={2}>
                  <Connector /><Swatch $c="#ff0000" />
                  <SigName>/out</SigName>
                  <Eye />
                </TreeRow>
              </OutColumn>
            </OutBlock>
          </LeftPanel>
          <Chart />
        </DashFrame>
      </PlotShell>
      <Footer />
      <MouseBar>
        <MouseGrip />
        <MouseL>mouse L:</MouseL>
        <MouseM>M:</MouseM>
        <span>R:</span>
      </MouseBar>
      <StatusRow>
        <StatusPink>3(4)</StatusPink>
        <StatusText>Trace: /in; Context: /home/ugrads/j/jay123q/cadence/simulation/inverter_simulate/spectre/schematic/psf; Dataset: tran-tran</StatusText>
        <StatusBox />
      </StatusRow>
      <Taskbar>
        <TaskCell $w={72}><WinLogo /></TaskCell>
        <TaskCell $w={72}><Search /></TaskCell>
        <TaskSep $ml={10} $mr={19} />
        <AppSlot><AppIcon><FolderTask /></AppIcon><AppLine /></AppSlot>
        <AppSlot><AppIcon><Chrome /></AppIcon><AppLine $split /></AppSlot>
        <AppSlot><AppIcon><Gear /></AppIcon><AppLine /></AppSlot>
        <AppSlot><AppIcon><TermTask /></AppIcon><AppLine /></AppSlot>
        <AppSlot><AppIcon><CBox /></AppIcon><AppLine $split /></AppSlot>
        <AppSlot><AppIcon><Book /></AppIcon><AppLine /></AppSlot>
        <AppSlot $on><AppIcon><NotepadIcon s={40} /></AppIcon><AppLine $on /></AppSlot>
        <TaskSpacer />
        <TaskSep $ml={0} $mr={15} />
        <TaskText $s={17}>Desktop</TaskText>
        <TaskCell $w={34}><Person /></TaskCell>
        <TaskText $s={17} $mt={-20}>Joshua Clapp</TaskText>
        <TaskText $s={14} $ml={6} $mr={8} $mt={-30}>»</TaskText>
        <TaskCell $w={46}><LineGlyph d="M1 13l8-9 8 9" c="#fff" /></TaskCell>
        <TaskCell $w={46}><Monitor /></TaskCell>
        <TaskCell $w={50}><Battery /></TaskCell>
        <TaskCell $w={42}><Speaker /></TaskCell>
        <ClockCol><ClockTime>6:01 PM</ClockTime><ClockDate>2/26/2023</ClockDate></ClockCol>
        <TaskCell $w={72}><Notif /></TaskCell>
      </Taskbar>
      <Tooltip>SSH browser (SFTP)</Tooltip>
      <Notepad>
        <NpTitle>
          <NotepadIcon />
          <NpTitleText>Uin - Notepad</NpTitleText>
          <NpBtn><LineGlyph d="M1 9h15" c="#111" /></NpBtn>
          <NpBtn><LineGlyph d="M1.5 1.5h15v15h-15z" c="#111" /></NpBtn>
          <NpBtn><LineGlyph d="M1 1l16 16M17 1L1 17" c="#111" /></NpBtn>
        </NpTitle>
        <NpMenu><span>File</span><span>Edit</span><span>Format</span><span>View</span><span>Help</span></NpMenu>
        <NpBody>
          <NpText>Joshua Clapp<br />930004089<br />Lab 4<Caret /></NpText>
          <NpScroll>
            <LineGlyph d="M2 10l7-7 7 7" c="#c4c4c4" sw={2.5} h={12} />
            <LineGlyph d="M2 2l7 7 7-7" c="#c4c4c4" sw={2.5} h={12} />
          </NpScroll>
        </NpBody>
        <NpStatus>
          <NpCell $w={35} $pl={6} $b>100</NpCell>
          <NpCell $w={180} $pl={9} $b>Windows (CRLF)</NpCell>
          <NpCell $w={100} $pl={10}>UTF-8</NpCell>
        </NpStatus>
      </Notepad>
    </Page>
  );
}
